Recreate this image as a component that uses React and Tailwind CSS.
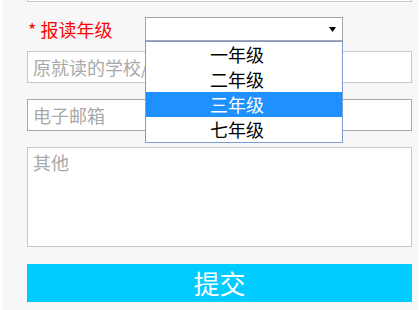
import React from "react";

const grades = ["一年级", "二年级", "三年级", "七年级"];

export default function App() {
  return (
    <div
      className="w-[419px] h-[310px] overflow-hidden bg-white pl-[2px]"
      style={{ fontFamily: '"Microsoft YaHei", "Noto Sans CJK SC", sans-serif' }}
    >
      <div className="relative h-[310px] w-[416px] bg-[#f7f7f7] pl-[25px] pr-[6px]">
        {/* bottom of the previous field */}
        <div className="h-[2px] border border-t-0 border-[#c8c8c8] bg-white" />

        {/* grade row */}
        <div className="mt-[15px] flex h-[24px] items-center">
          <label className="w-[118px] pl-[1px] text-[18px] leading-[24px] text-[#ff0000]">* 报读年级</label>
          <div className="relative flex h-[24px] w-[198px] items-center justify-end border border-[#a6a6a6] bg-white pr-[6px]">
            <svg width="7" height="5" viewBox="0 0 7 5">
              <polygon points="0,0 7,0 3.5,5" fill="#000" />
            </svg>
          </div>
        </div>

        {/* open options list */}
        <ul className="absolute left-[143px] top-[41px] z-10 w-[198px] border border-[#7a9cd3] bg-white">
          {grades.map((g) => (
            <li
              key={g}
              className={`h-[25px] pl-[64px] text-[18px] leading-[25px] ${
                g === "三年级" ? "bg-[#1e90ff] text-white" : "text-black"
              }`}
            >
              {g}
            </li>
          ))}
        </ul>

        <input
          placeholder="原就读的学校/幼儿园"
          className="mt-[10px] block h-[32px] w-full border border-[#c8c8c8] bg-white px-[5px] text-[18px] placeholder:text-[#a9a9a9] outline-none"
        />
        <input
          placeholder="电子邮箱"
          className="mt-[16px] block h-[32px] w-full border border-[#a9a9a9] bg-white px-[5px] text-[18px] placeholder:text-[#a9a9a9] outline-none"
        />
        <textarea
          placeholder="其他"
          className="mt-[16px] block h-[100px] w-full resize-none border border-[#c8c8c8] bg-white px-[5px] py-[2px] text-[18px] leading-[24px] placeholder:text-[#a9a9a9] outline-none"
        />
        <button className="mt-[17px] block h-[38px] w-full bg-[#00ccff] text-[26px] leading-[38px] text-white">
          提交
        </button>
      </div>
    </div>
  );
}
